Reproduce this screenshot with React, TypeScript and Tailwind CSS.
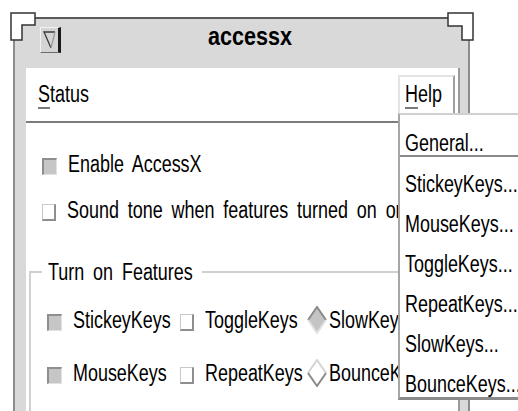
import type { ReactNode } from "react";

// the X font in the shot is a narrow Helvetica; squeeze Liberation Sans to match
function N({ children }: { children: ReactNode }) {
  return <span className="inline-block origin-left scale-x-[0.78] whitespace-nowrap">{children}</span>;
}

function Check({ on }: { on?: boolean }) {
  if (on) {
    return (
      <span className="block w-[15px] h-[17px] mt-[5px] shrink-0 bg-[#c6c6c6] border-t-2 border-l-2 border-b border-r border-t-[#8e8e8e] border-l-[#8e8e8e] border-b-[#e2e2e2] border-r-[#e2e2e2]" />
    );
  }
  return (
    <span className="block w-[14px] h-[17px] mt-[5px] shrink-0 bg-white border-t border-l border-b-2 border-r-2 border-t-[#c8c8c8] border-l-[#c8c8c8] border-b-[#8e8e8e] border-r-[#8e8e8e]" />
  );
}

function Diamond({ on }: { on?: boolean }) {
  return (
    <svg width="20" height="28" viewBox="0 0 20 28" className="shrink-0 -mt-[3px]">
      <polygon points="10,1 19,14 10,27 1,14" fill={on ? "#c4c4c4" : "#ffffff"} />
      <polyline
        points="1,14 10,1 19,14"
        fill="none"
        stroke={on ? "#8a8a8a" : "#d4d4d4"}
        strokeWidth="2"
      />
      <polyline
        points="1,14 10,27 19,14"
        fill="none"
        stroke={on ? "#e2e2e2" : "#8a8a8a"}
        strokeWidth="2"
      />
    </svg>
  );
}

function Option({ mark, children }: { mark: ReactNode; children: ReactNode }) {
  return (
    <div className="flex items-start gap-[11px] h-[22px]">
      {mark}
      <N>{children}</N>
    </div>
  );
}

function RadioOption({ on, children }: { on?: boolean; children: ReactNode }) {
  return (
    <div className="flex items-start gap-[2px] h-[22px]">
      <Diamond on={on} />
      <N>{children}</N>
    </div>
  );
}

const MENU_ITEMS = [
  "StickeyKeys...",
  "MouseKeys...",
  "ToggleKeys...",
  "RepeatKeys...",
  "SlowKeys...",
  "BounceKeys...",
];

export default function App() {
  return (
    <div className="relative w-[518px] h-[411px] overflow-hidden bg-white text-black font-['Liberation_Sans',Arial,sans-serif] text-[23px] leading-[22px] [word-spacing:5px]">
      {/* Window */}
      <div className="ml-[13px] mt-[17px] w-[457px] h-[400px] flex flex-col bg-[#d9d9d9] border-t-2 border-x-2 border-t-[#5a5a5a] border-x-[#8c8c8c]">
        {/* Title bar */}
        <div className="h-[49px] shrink-0 flex items-start">
          <div className="mt-[8px] ml-[25px] w-[21px] h-[26px] bg-[#d4d4d4] border-t border-l border-b border-r-[3px] border-t-[#f2f2f2] border-l-[#f2f2f2] border-b-[#6a6a6a] border-r-[#1a1a1a]">
            <svg width="17" height="24" viewBox="0 0 17 24">
              <polyline points="14,4 3,4 10,20" fill="none" stroke="#3a3a3a" strokeWidth="1.3" />
              <line x1="14" y1="4" x2="10" y2="20" stroke="#9a9a9a" strokeWidth="1.3" />
            </svg>
          </div>
          <span className="ml-[147px] mt-[4px] inline-block origin-left scale-x-[0.83] text-[26px] leading-[26px] font-bold">
            accessx
          </span>
        </div>

        {/* Client area */}
        <div className="ml-[11px] w-[434px] flex-1 flex flex-col bg-white border-r-2 border-r-[#9a9a9a]">
          {/* Menu bar */}
          <div className="h-[55px] shrink-0 flex items-start justify-between border-b-2 border-b-[#7c7c7c]">
            <span className="ml-[12px] mt-[15px]">
              <N>
                <span className="underline decoration-[#7a7a7a] decoration-2 underline-offset-[5px]">S</span>
                tatus
              </N>
            </span>
            <div className="mt-[7px] mr-[3px] w-[57px] h-[46px] pl-[5px] pt-[6px] border-t-2 border-l-2 border-r-2 border-t-[#e4e4e4] border-l-[#e4e4e4] border-r-[#a0a0a0]">
              <N>
                <span className="underline decoration-[#7a7a7a] decoration-2 underline-offset-[5px]">H</span>
                elp
              </N>
            </div>
          </div>

          {/* Body */}
          <div className="flex-1 flex flex-col">
            <div className="ml-[16px] mt-[30px]">
              <Option mark={<Check on />}>Enable AccessX</Option>
            </div>
            <div className="ml-[16px] mt-[24px]">
              <Option mark={<Check />}>Sound tone when features turned on or off</Option>
            </div>

            {/* Turn on Features group */}
            <div className="ml-[3px] mr-[8px] mt-[40px] flex-1 flex flex-col">
              <div className="h-[22px] flex">
                <div className="w-[13px] h-[12px] self-end border-l-2 border-t-2 border-[#d0d0d0]" />
                <div className="w-[160px] shrink-0 pl-[6px]">
                  <N>Turn on Features</N>
                </div>
                <div className="flex-1 h-[2px] self-center bg-[#d0d0d0]" />
              </div>
              <div className="flex-1 border-l-2 border-[#d0d0d0] pt-[26px]">
                <div className="ml-[16px] grid grid-cols-[133px_127px_1fr]">
                  <Option mark={<Check on />}>StickeyKeys</Option>
                  <Option mark={<Check />}>ToggleKeys</Option>
                  <RadioOption on>SlowKeys</RadioOption>
                </div>
                <div className="ml-[16px] mt-[31px] grid grid-cols-[133px_127px_1fr]">
                  <Option mark={<Check on />}>MouseKeys</Option>
                  <Option mark={<Check />}>RepeatKeys</Option>
                  <RadioOption>BounceKeys</RadioOption>
                </div>
              </div>
            </div>
          </div>
        </div>
      </div>

      {/* Window frame corners */}
      <svg className="absolute left-[10px] top-[12px]" width="27" height="30" viewBox="0 0 27 30">
        <polygon points="1,1 25,1 25,13 12,13 12,28 1,28" fill="#ffffff" stroke="#333333" strokeWidth="1.5" />
      </svg>
      <svg className="absolute left-[446px] top-[12px]" width="29" height="30" viewBox="0 0 29 30">
        <polygon points="2,1 27,1 27,28 16,28 16,14 2,14" fill="#ffffff" stroke="#333333" strokeWidth="1.5" />
      </svg>

      {/* Help pulldown */}
      <div className="absolute left-[398px] top-[113px] w-[140px] z-10 bg-white border-t-2 border-l-2 border-b-[3px] border-t-[#d0d0d0] border-l-[#a6a6a6] border-b-[#8a8a8a] [word-spacing:0px]">
        <div className="h-[40px] pl-[5px] pt-[17px]">
          <N>General...</N>
        </div>
        <div className="h-[2px] bg-[#8a8a8a]" />
        {MENU_ITEMS.map((item) => (
          <div key={item} className="h-[40px] pl-[5px] pt-[16px]">
            <N>{item}</N>
          </div>
        ))}
      </div>
    </div>
  );
}
